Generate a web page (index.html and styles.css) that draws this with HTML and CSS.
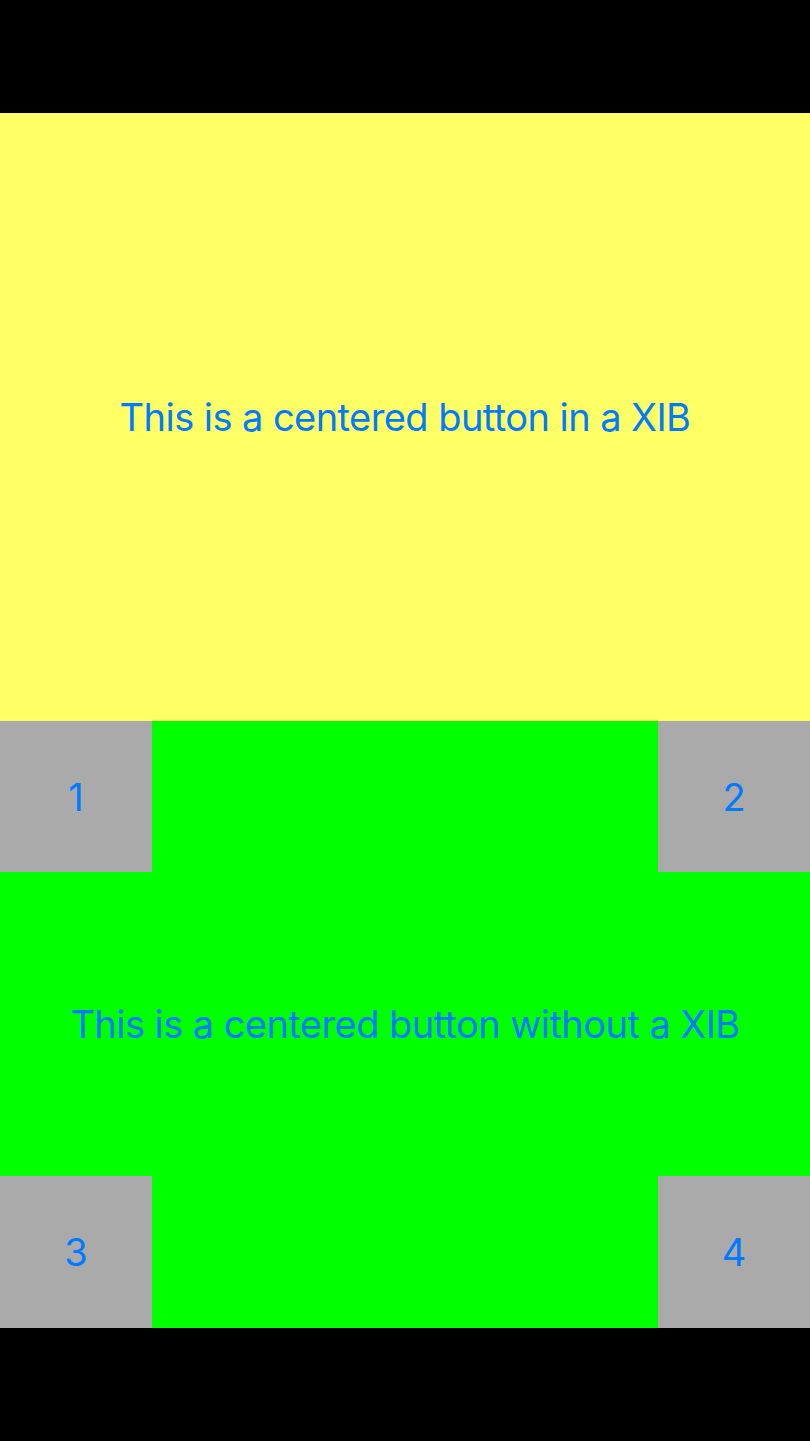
FILE: index.html
```html
<!DOCTYPE html>
<html>
<head>
<meta charset="utf-8">
<link rel="stylesheet" href="styles.css">
</head>
<body>
<div class="screen">
  <div class="bar"></div>
  <div class="xib"><button class="btn">This is a centered button in a XIB</button></div>
  <div class="plain">
    <div class="row">
      <button class="corner">1</button>
      <button class="corner">2</button>
    </div>
    <div class="middle"><button class="btn btn-wide">This is a centered button without a XIB</button></div>
    <div class="row">
      <button class="corner">3</button>
      <button class="corner">4</button>
    </div>
  </div>
  <div class="bar bar-bottom"></div>
</div>
</body>
</html>
```
FILE: styles.css
```css
html, body {
  margin: 0;
  padding: 0;
  background: #000;
}
.screen {
  width: 810px;
  height: 1441px;
  display: flex;
  flex-direction: column;
  font-family: Inter, "Noto Sans", sans-serif;
}
.bar {
  height: 113px;
  background: #000;
}
.bar-bottom {
  height: 113px;
}
.xib {
  height: 608px;
  background: #ffff66;
  display: flex;
  align-items: center;
  justify-content: center;
}
.btn {
  background: none;
  border: 0;
  padding: 0;
  margin: 0;
  font-family: inherit;
  font-size: 38px;
  letter-spacing: -0.56px;
  color: #007aff;
  white-space: nowrap;
}
.plain {
  height: 607px;
  background: #00ff00;
  display: flex;
  flex-direction: column;
}
.row {
  display: flex;
  justify-content: space-between;
  height: 152px;
}
.row:first-child {
  height: 151px;
}
.corner {
  width: 152px;
  height: 100%;
  background: #aaaaaa;
  border: 0;
  padding: 0;
  margin: 0;
  font-family: inherit;
  font-size: 38px;
  color: #007aff;
}
.middle {
  flex: 1;
  display: flex;
  align-items: center;
  justify-content: center;
}
```
